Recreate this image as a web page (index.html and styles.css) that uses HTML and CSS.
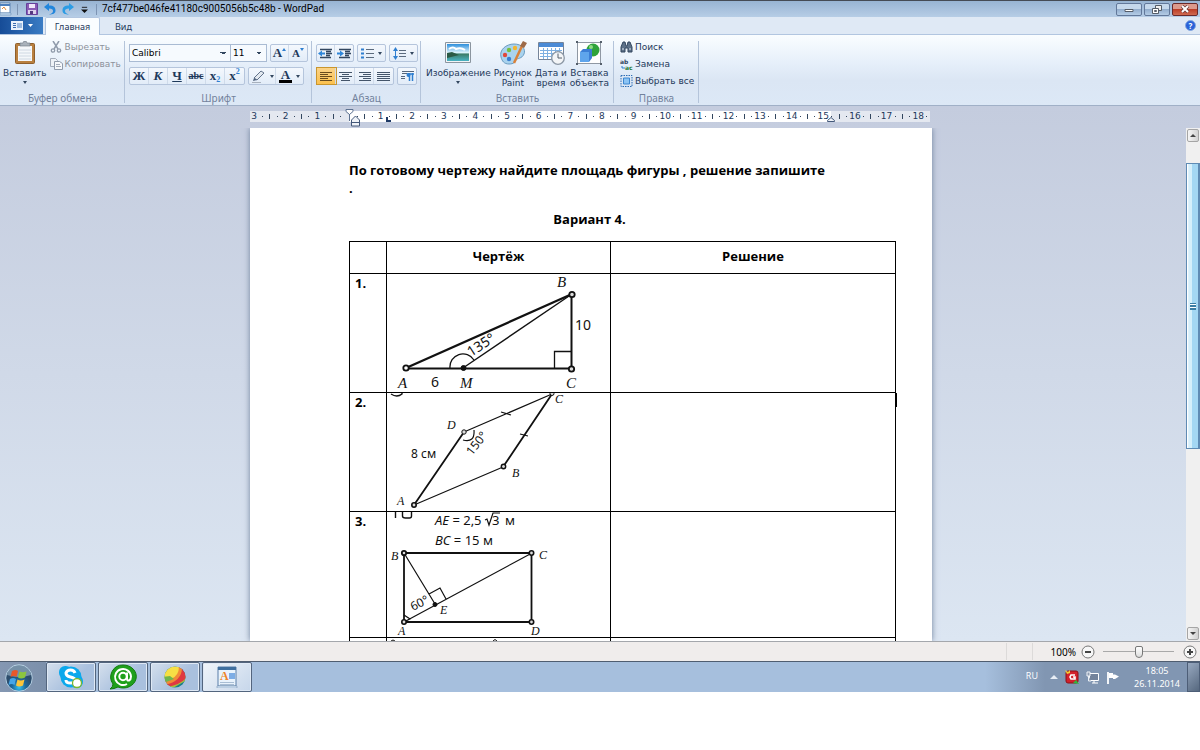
FILE: index.html
```html
<!DOCTYPE html>
<html lang="ru">

<head>
    <meta charset="UTF-8">
    <title>WordPad</title>
    <link rel="stylesheet" href="styles.css">
</head>

<body>
<div class="titlebar">
    <svg class="app-icon" width="12" height="14" viewBox="0 0 12 14"><path d="M0 1h10v10H0z" fill="#fff" stroke="#5f86b4"/><path d="M0 3h10" stroke="#4d80bd" stroke-width="2"/><path d="M2 7l2-2 2 3" stroke="#e08a3a" fill="none"/><path d="M0 11h11v2H0z" fill="#c3daf0" stroke="#6f93bd" stroke-width=".6"/></svg>
    <span class="bar-sep"></span>
    <button class="quick" aria-label="Сохранить"><svg width="12" height="12" viewBox="0 0 12 12"><path d="M.5.5h11v11H.5z" fill="#8a5bb5" stroke="#65409a"/><path d="M3 1h6v4H3z" fill="#efe6fa"/><path d="M2 7h8v4H2z" fill="#ddd0ec"/><path d="M4 8h3v3H4z" fill="#54387f"/></svg></button>
    <button class="quick" aria-label="Отменить"><svg width="12" height="12" viewBox="0 0 12 12"><path d="M0 4l5-4v2.500c5 0 6.500 2 6.500 5S9 11.500 5 11.500c3-1 4-2 4-3.500S8 5.500 5 5.500V8z" fill="#2286dc"/></svg></button>
    <button class="quick" aria-label="Вернуть"><svg width="12" height="12" viewBox="0 0 12 12"><path d="M12 4L7 0v2.500c-5 0-6.500 2-6.500 5s2.500 4 6.500 4C4 10.500 3 9.500 3 8s1-2.500 4-2.500V8z" fill="#2c9ce4"/></svg></button>
    <button class="quick quick-menu" aria-label="Настройка"><svg width="7" height="7" viewBox="0 0 8 8"><path d="M1 1.500h6" stroke="#111"/><path d="M0 4h8L4 8z" fill="#111"/></svg></button>
    <span class="bar-sep"></span>
    <span class="window-title">7cf477be046fe41180c9005056b5c48b - WordPad</span>
    <div class="window-buttons">
        <button class="win" aria-label="Свернуть"><svg width="10" height="8" viewBox="0 0 10 8"><path d="M1 4.500h8v2H1z" fill="#fff" stroke="#555d68"/></svg></button>
        <button class="win" aria-label="Восстановить"><svg width="12" height="9" viewBox="0 0 12 9"><path d="M4.500.5h6v5h-6z" fill="#eee" stroke="#555d68"/><path d="M1.500 3.500h6v5h-6z" fill="#fff" stroke="#555d68"/><path d="M3.500 5.500h2v1h-2z" stroke="#555d68" fill="none"/></svg></button>
        <button class="win win-close" aria-label="Закрыть"><svg width="10" height="8" viewBox="0 0 10 8"><path d="M2 1l6 6M8 1L2 7" stroke="#6b3a3a" stroke-width="3.500"/><path d="M2 1l6 6M8 1L2 7" stroke="#fff" stroke-width="2"/></svg></button>
    </div>
</div>

<div class="tabs">
    <button class="file-tab" aria-label="Файл"><svg width="22" height="9" viewBox="0 0 22 9"><path d="M0 0h12v9H0z" fill="#e9f1fb"/><path d="M2 2.500h3M2 4.500h3M2 6.500h3" stroke="#3b6cb0"/><path d="M6 2h5v5H6z" fill="#9dbbe0"/><path d="M17 3h5l-2.500 3z" fill="#fff"/></svg></button>
    <button class="tab tab-active">Главная</button>
    <button class="tab">Вид</button>
    <button class="help" aria-label="Справка">?</button>
</div>

<div class="ribbon">
    <div class="group group-clipboard">
        <div class="group-body">
            <button class="big"><svg width="22" height="24" viewBox="0 0 22 24"><rect x="1.500" y="2.500" width="19" height="20" rx="1" fill="#b9803f" stroke="#8f5f2b"/><path d="M4 5h14v15H4z" fill="#f4f7fa"/><path d="M5 9h12M5 12h12M5 15h12M5 18h12" stroke="#cfd8e2"/><path d="M6 2h3l1-2h2l1 2h3v3H6z" fill="#a9b2bb" stroke="#6d7680" stroke-width=".6"/></svg><span>Вставить</span><i class="arrow"></i></button>
            <div class="list">
                <button class="row-btn disabled"><svg width="13" height="12" viewBox="0 0 13 12"><path d="M3 0l5 8M9 0L4 8" stroke="#909bab" stroke-width="1.500"/><circle cx="3" cy="9.500" r="1.700" fill="none" stroke="#909bab" stroke-width="1.300"/><circle cx="9" cy="9.500" r="1.700" fill="none" stroke="#909bab" stroke-width="1.300"/></svg>Вырезать</button>
                <button class="row-btn disabled"><svg width="13" height="12" viewBox="0 0 13 12"><path d="M.5.5h5l2 2v6h-7z" fill="#eef2f7" stroke="#a3acba"/><path d="M4.500 3.500h5l3 2v6h-8z" fill="#f6f8fb" stroke="#909bab"/><path d="M6 6.500h4M6 8.500h5" stroke="#a3acba"/></svg>Копировать</button>
            </div>
        </div>
        <div class="group-name">Буфер обмена</div>
    </div>

    <div class="group group-font">
        <div class="group-body group-rows">
            <div class="tool-row">
                <div class="combos">
                    <select class="combo combo-font" aria-label="Шрифт"><option>Calibri</option></select>
                    <select class="combo combo-size" aria-label="Размер"><option>11</option></select>
                </div>
                <div class="set">
                    <button class="tool glyph" aria-label="Увеличить">A<i class="up"></i></button>
                    <button class="tool glyph glyph-small" aria-label="Уменьшить">A<i class="down"></i></button>
                </div>
            </div>
            <div class="tool-row">
                <div class="set set-wide">
                    <button class="tool glyph">Ж</button>
                    <button class="tool glyph italic">К</button>
                    <button class="tool glyph underline">Ч</button>
                    <button class="tool glyph strike">abc</button>
                    <button class="tool glyph">x<sub>2</sub></button>
                    <button class="tool glyph">x<sup>2</sup></button>
                </div>
                <div class="set">
                    <button class="tool tool-split" aria-label="Выделение"><svg width="15" height="13" viewBox="0 0 15 13"><path d="M3 8l7-7 3 2-7 7z" fill="#e3e9f0" stroke="#63738a"/><path d="M3 8l3 2-4 1z" fill="#4d5f7a"/><path d="M1 12.500h9" stroke="#a8b1bd"/></svg><i class="arrow"></i></button>
                    <button class="tool tool-split glyph" aria-label="Цвет текста"><span class="color-a">A</span><i class="arrow"></i></button>
                </div>
            </div>
        </div>
        <div class="group-name">Шрифт</div>
    </div>

    <div class="group group-para">
        <div class="group-body group-rows">
            <div class="tool-row">
                <div class="set">
                    <button class="tool" aria-label="Уменьшить отступ"><svg width="15" height="11" viewBox="0 0 15 11"><path d="M2 1.500h12M8 3.500h5M8 5.500h6M8 7.500h4M2 9.500h11" stroke="#33475f" stroke-width="1.300"/><path d="M0 5.500l4-3v2h3v2H4v2z" fill="#2f86d8"/></svg></button>
                    <button class="tool" aria-label="Увеличить отступ"><svg width="15" height="11" viewBox="0 0 15 11"><path d="M2 1.500h12M8 3.500h5M8 5.500h6M8 7.500h4M2 9.500h11" stroke="#33475f" stroke-width="1.300"/><path d="M7 5.500l-4-3v2H0v2h3v2z" fill="#2f86d8"/></svg></button>
                </div>
                <div class="set">
                    <button class="tool tool-split" aria-label="Список"><svg width="13" height="11" viewBox="0 0 13 11"><path d="M0 1.500h3M0 5.500h3M0 9.500h3" stroke="#2f7fd0" stroke-width="2"/><path d="M5 1.500h8M5 5.500h8M5 9.500h8" stroke="#5b6b7e"/></svg><i class="arrow"></i></button>
                </div>
                <div class="set">
                    <button class="tool tool-split" aria-label="Интервал"><svg width="13" height="13" viewBox="0 0 13 13"><path d="M2.500 2v9" stroke="#2f7fd0"/><path d="M0 4l2.500-4L5 4zM0 9l2.500 4L5 9z" fill="#2f7fd0"/><path d="M6 3.500h7M6 6.500h7M6 9.500h7" stroke="#5b6b7e"/></svg><i class="arrow"></i></button>
                </div>
            </div>
            <div class="tool-row">
                <div class="set set-wide">
                    <button class="tool tool-on" aria-label="По левому краю"><svg width="13" height="11" viewBox="0 0 13 11"><path d="M0 1.500h12M0 3.500h8M0 5.500h12M0 7.500h8M0 9.500h12" stroke="#6a4c1c"/></svg></button>
                    <button class="tool" aria-label="По центру"><svg width="13" height="11" viewBox="0 0 13 11"><path d="M0 1.500h13M3 3.500h7M0 5.500h13M3 7.500h7M2 9.500h9" stroke="#44556a"/></svg></button>
                    <button class="tool" aria-label="По правому краю"><svg width="13" height="11" viewBox="0 0 13 11"><path d="M1 1.500h12M5 3.500h8M1 5.500h12M5 7.500h8M1 9.500h12" stroke="#44556a"/></svg></button>
                    <button class="tool" aria-label="По ширине"><svg width="13" height="11" viewBox="0 0 13 11"><path d="M0 1.500h13M0 3.500h13M0 5.500h13M0 7.500h13M0 9.500h13" stroke="#44556a"/></svg></button>
                </div>
                <div class="set">
                    <button class="tool" aria-label="Абзац"><svg width="13" height="12" viewBox="0 0 13 12"><path d="M1 1.500h12M1 3.500h5M0 6.500h4M0 8.500h4" stroke="#55667b"/><path d="M8.500 3v8M11.500 3v8M6 4h7" stroke="#2f7fd0" stroke-width="1.500"/><circle cx="7.500" cy="5" r="2" fill="#2f7fd0"/></svg></button>
                </div>
            </div>
        </div>
        <div class="group-name">Абзац</div>
    </div>

    <div class="group group-insert">
        <div class="group-body">
            <button class="big"><svg width="28" height="24" viewBox="0 0 28 24"><defs><linearGradient id="sky" x2="0" y2="1"><stop offset="0" stop-color="#2d8fdc"/><stop offset=".5" stop-color="#d9f1fb"/><stop offset=".6" stop-color="#3c7d6a"/><stop offset="1" stop-color="#49b3c4"/></linearGradient></defs><path d="M1.500 1.500h25v20h-25z" fill="#f3f5f7" stroke="#8b959f"/><path d="M3 3h22v17H3z" fill="url(#sky)"/><path d="M3 12l5-1 7 3-12 3z" fill="#2b5a45"/><path d="M5 8q4-3 7 0 5-2 9 1" stroke="#fff" stroke-width="2" fill="none"/></svg><span>Изображение</span><i class="arrow"></i></button>
            <button class="big"><svg width="28" height="24" viewBox="0 0 28 24"><path d="M2 16C0 9 7 3 15 3s12 5 10 10-7 4-8 6-2 4-7 4-7-3-8-7z" fill="#a9d3ee" stroke="#6a9bc0"/><circle cx="6" cy="14" r="2.200" fill="#e2483a"/><circle cx="10" cy="9" r="2.200" fill="#79bf3f"/><circle cx="16" cy="7" r="2.200" fill="#f2b632"/><circle cx="10" cy="18" r="2.200" fill="#3a7fd0"/><path d="M15 22l8-17" stroke="#d9823a" stroke-width="2.500"/><path d="M21 5l3-5 4 2-3 5z" fill="#9d6b48"/></svg><span>Рисунок<br>Paint</span></button>
            <button class="big"><svg width="28" height="24" viewBox="0 0 28 24"><path d="M1.500 1.500h25v17h-25z" fill="#fff" stroke="#75859a"/><path d="M2 2h24v4H2z" fill="#4b8bd6"/><path d="M3 9.500h22M3 12.500h22M3 15.500h22M6.500 7v11M10.500 7v11M14.500 7v11M18.500 7v11M22.500 7v11" stroke="#7db0e2"/><circle cx="21" cy="17" r="6.300" fill="#f3f5f7" stroke="#8c98a5" stroke-width="1.300"/><path d="M21 12.500V17h4" stroke="#55606c" fill="none"/></svg><span>Дата и<br>время</span></button>
            <button class="big"><svg width="26" height="24" viewBox="0 0 26 24"><path d="M1.500 1.500h23v21h-23z" fill="#fff" stroke="#8f98a3"/><circle cx="17" cy="9" r="6.500" fill="#2fa33b"/><circle cx="15" cy="6" r="2" fill="#8fdc84"/><path d="M4 11l3-3h9v9l-3 4H4z" fill="#3c7fd6"/><path d="M4 11h9v10H4z" fill="#5fa5ec"/><path d="M0 0h2v2H0zM24 0h2v2h-2zM0 22h2v2H0zM24 22h2v2h-2z" fill="#555f6b"/></svg><span>Вставка<br>объекта</span></button>
        </div>
        <div class="group-name">Вставить</div>
    </div>

    <div class="group group-edit">
        <div class="group-body">
            <div class="list">
                <button class="row-btn"><svg width="13" height="12" viewBox="0 0 13 12"><path d="M1 6l2-5h2l1 4h1l1-4h2l2 5v5H8V7H5v4H1z" fill="#5d7188" stroke="#33475f"/><path d="M2 8h2M9 8h2" stroke="#dfe8f2"/></svg>Поиск</button>
                <button class="row-btn"><svg class="replace" width="13" height="12" viewBox="0 0 13 12"><text x="0" y="6" class="ico-text">ab</text><text x="5" y="12" class="ico-text ico-green">ac</text><path d="M2 8v2h3" stroke="#2f7fd0" fill="none"/></svg>Замена</button>
                <button class="row-btn"><svg width="13" height="12" viewBox="0 0 13 12"><path d="M1 .5h11v11H1z" fill="none" stroke="#2d6cb4" stroke-dasharray="1.500 1"/><path d="M3.500 3h6v6h-6z" fill="#8cc4f4" stroke="#3c86cf"/></svg>Выбрать все</button>
            </div>
        </div>
        <div class="group-name">Правка</div>
    </div>
</div>

<div class="workspace">
    <div class="ruler-line">
        <div class="ruler">
            <div class="cm"><b>3</b><i></i></div>
            <div class="cm"><b>2</b><i></i></div>
            <div class="cm"><b>1</b><i></i></div>
            <div class="cm"><b></b><i></i></div>
            <div class="cm"><b>1</b><i></i></div>
            <div class="cm"><b>2</b><i></i></div>
            <div class="cm"><b>3</b><i></i></div>
            <div class="cm"><b>4</b><i></i></div>
            <div class="cm"><b>5</b><i></i></div>
            <div class="cm"><b>6</b><i></i></div>
            <div class="cm"><b>7</b><i></i></div>
            <div class="cm"><b>8</b><i></i></div>
            <div class="cm"><b>9</b><i></i></div>
            <div class="cm"><b>10</b><i></i></div>
            <div class="cm"><b>11</b><i></i></div>
            <div class="cm"><b>12</b><i></i></div>
            <div class="cm"><b>13</b><i></i></div>
            <div class="cm"><b>14</b><i></i></div>
            <div class="cm"><b>15</b><i></i></div>
            <div class="cm"><b>16</b><i></i></div>
            <div class="cm"><b>17</b><i></i></div>
            <div class="cm cm-half"><b>18</b><i></i></div>
            <svg class="marks" width="680" height="20" viewBox="250 108 680 20"><path d="M346 109.500h7v2l-3.500 3-3.500-3zM349.500 114v7" fill="#fff" stroke="#5d7291"/><path d="M351.500 126v-6l4-4 4 4v6zM351.500 122.500h8" fill="#f0f3f8" stroke="#44597a"/><path d="M387 117v4h4" stroke="#1f3a66" stroke-width="2" fill="none"/><path d="M827.500 121.500v-1l3.500-3 3.500 3v1z" fill="#f0f3f8" stroke="#44597a"/></svg>
        </div>
    </div>
    <div class="view">
        <div class="paper-area">
            <div class="paper">
                <p class="task">По готовому чертежу найдите площадь фигуры , решение запишите<br>.</p>
                <p class="variant">Вариант 4.</p>
                <table class="tasks">
                    <tr class="head">
                        <th class="num"></th>
                        <th class="draw">Чертёж</th>
                        <th>Решение</th>
                    </tr>
                    <tr>
                        <td class="num">1.</td>
                        <td><svg class="figure" width="223" height="118" viewBox="387 274 223 118">
                            <g class="line">
                                <path d="M406 368l166-74" stroke-width="2.300"/>
                                <path d="M463 368l109-74" stroke-width="1.400"/>
                                <path d="M406 368.500h166" stroke-width="2"/>
                                <path d="M571.500 295v74" stroke-width="2"/>
                                <path d="M554.500 368v-16.500h17M450 368a13 13 0 0 1 24-8" stroke-width="1.300"/>
                                <circle cx="406" cy="368" r="2.700" stroke-width="1.800" class="hollow"/>
                                <circle cx="463.500" cy="368" r="2.500" class="dot"/>
                                <circle cx="571.500" cy="369" r="2.700" stroke-width="1.800"/>
                                <circle cx="572" cy="294.500" r="2.700" stroke-width="1.800"/>
                            </g>
                            <text x="398" y="388" class="letter">A</text>
                            <text x="431" y="387" class="digit">6</text>
                            <text x="460" y="388" class="letter">M</text>
                            <text x="566" y="388" class="letter">C</text>
                            <text x="557" y="287" class="letter">B</text>
                            <text x="575" y="330" class="digit">10</text>
                            <text x="471" y="357" class="digit" transform="rotate(-33 471 357)">135°</text>
                        </svg></td>
                        <td></td>
                    </tr>
                    <tr>
                        <td class="num">2.</td>
                        <td><svg class="figure" width="223" height="118" viewBox="387 393 223 118">
                            <g class="line">
                                <path d="M391 394q6 4 11 0v-2" stroke-width="1.400"/>
                                <path d="M414 505l50-73M503 467l49-73" stroke-width="1.800"/>
                                <path d="M464 432l88-38M414 505l89-38M501 412l10 3M520 434l8 2M474 430q1 13-11 10" stroke-width="1.200"/>
                                <circle cx="414" cy="505" r="2.200" stroke-width="1.600"/>
                                <circle cx="464" cy="432" r="2.200"/>
                                <circle cx="503.500" cy="466.500" r="2.200" stroke-width="1.400"/>
                                <circle cx="552" cy="393.500" r="2"/>
                            </g>
                            <text x="397" y="505" class="letter small">A</text>
                            <text x="512" y="477" class="letter small">B</text>
                            <text x="555" y="403" class="letter small">C</text>
                            <text x="447" y="429" class="letter small">D</text>
                            <text x="411" y="458" class="digit small">8 см</text>
                            <text x="472" y="456" class="digit small" transform="rotate(-52 472 456)">150°</text>
                        </svg></td>
                        <td class="with-caret"><span class="caret"></span></td>
                    </tr>
                    <tr>
                        <td class="num">3.</td>
                        <td><svg class="figure" width="223" height="125" viewBox="387 512 223 125">
                            <g class="line">
                                <path d="M395.500 512v6M402.500 512v4q0 2 3 2h4q2 0 2-2v-4" stroke-width="1.400"/>
                                <path d="M404 553h127.500v69H404z" stroke-width="1.800"/>
                                <path d="M404 553l31 51M404 622l128-69M429 594l11-6 6 11M404 615l6 4-6 3" stroke-width="1.200"/>
                                <circle cx="404" cy="553" r="2.200" stroke-width="1.800"/>
                                <circle cx="531.500" cy="553" r="2.200" stroke-width="1.600"/>
                                <circle cx="404" cy="622" r="2.200" stroke-width="1.600"/>
                                <circle cx="531.500" cy="622" r="2.200" stroke-width="1.600"/>
                                <circle cx="435" cy="604.500" r="2" class="dot"/>
                                <path d="M485 520l2-1 2 6 4-12h7" stroke-width="1.200"/>
                            </g>
                            <text x="435" y="525" class="formula"><tspan class="it">AE</tspan> = 2,5</text>
                            <text x="492" y="525" class="formula">3</text>
                            <text x="505" y="525" class="formula">м</text>
                            <text x="435" y="545" class="formula"><tspan class="it">BC</tspan> = 15 м</text>
                            <text x="391" y="560" class="letter small">B</text>
                            <text x="539" y="559" class="letter small">C</text>
                            <text x="398" y="635" class="letter small">A</text>
                            <text x="531" y="635" class="letter small">D</text>
                            <text x="440" y="614" class="letter small">E</text>
                            <text x="413" y="611" class="digit small" transform="rotate(-27 413 611)">60°</text>
                        </svg></td>
                        <td></td>
                    </tr>
                    <tr>
                        <td class="num"></td>
                        <td><svg class="figure" width="223" height="20" viewBox="387 638 223 20"><g class="line"><path d="M391 641l2-1 2 1M493 641q2-3 4 0"/></g></svg></td>
                        <td></td>
                    </tr>
                </table>
            </div>
        </div>
        <div class="scrollbar">
            <button class="scroll-btn" aria-label="Вверх"><i class="tri-up"></i></button>
            <div class="track"><div class="thumb"><i></i></div></div>
            <button class="scroll-btn" aria-label="Вниз"><i class="tri-down"></i></button>
        </div>
    </div>
</div>

<div class="status">
    <span class="status-cell"></span>
    <label class="zoom-label" for="zoom">100%</label>
    <button class="zoom-btn" aria-label="Мельче"><svg width="14" height="14" viewBox="0 0 14 14"><circle cx="7" cy="7" r="6" fill="#f7f7f7" stroke="#777"/><path d="M4 7h6" stroke="#444" stroke-width="2"/></svg></button>
    <input class="zoom" id="zoom" type="range" min="0" max="200" value="100">
    <button class="zoom-btn" aria-label="Крупнее"><svg width="14" height="14" viewBox="0 0 14 14"><circle cx="7" cy="7" r="6" fill="#f7f7f7" stroke="#777"/><path d="M4 7h6M7 4v6" stroke="#444" stroke-width="2"/></svg></button>
</div>

<div class="taskbar">
    <button class="start" aria-label="Пуск"><svg width="30" height="28" viewBox="0 0 30 28"><defs><radialGradient id="orb" cy=".85"><stop offset="0" stop-color="#35c3f0"/><stop offset=".5" stop-color="#1d6a9e"/><stop offset="1" stop-color="#2d4d6c"/></radialGradient></defs><circle cx="15" cy="14" r="13.300" fill="url(#orb)" stroke="#b5cfe2"/><path d="M3 11a12 10 0 0 1 24 0q-12 4-24 0z" fill="#cfe2ef" opacity=".45"/><path d="M8 7q4-2 6 0l-1.500 6q-3-2-6 0z" fill="#e9572b"/><path d="M15.500 7.500q3 1.500 7 0l-1.500 6q-4 2-7 0z" fill="#8cc63e"/><path d="M6 15q3-2 6 0l-1.500 6q-3-2-6 0z" fill="#45a5e8"/><path d="M13.500 15.500q3 2 7 0l-1.500 6q-4 2-7 0z" fill="#fbc53a"/></svg></button>
    <button class="task-btn" aria-label="Skype"><svg width="26" height="24" viewBox="0 0 26 24"><rect x="1" y="1" width="13" height="13" rx="6" fill="#0ba8ec"/><rect x="12" y="10" width="13" height="13" rx="6" fill="#0ba8ec"/><circle cx="13" cy="12" r="10.500" fill="#0ba8ec"/><path d="M17 8q-1-3-4.500-3T8 8q0 3 4.500 4T17 15q0 3-4.500 3T8 15" fill="none" stroke="#fff" stroke-width="3"/><circle cx="19" cy="18" r="4.500" fill="#fff" stroke="#7cb82f" stroke-width="1.300"/></svg></button>
    <button class="task-btn" aria-label="Агент"><svg width="28" height="26" viewBox="0 0 28 26"><path d="M14 1a13 11.500 0 1 1-5 22q-4 2-8 2 3-2 3-5A12 12 0 0 1 14 1z" fill="#1fa01c" stroke="#13790f"/><circle cx="14" cy="12.500" r="3.700" fill="none" stroke="#fff" stroke-width="2"/><path d="M18 8.500v6q0 2.500 2 2 2-1 2-4a8 8 0 1 0-4 7.500" fill="none" stroke="#fff" stroke-width="2"/></svg></button>
    <button class="task-btn" aria-label="Браузер"><svg width="24" height="22" viewBox="0 0 24 22"><clipPath id="ball"><circle cx="12" cy="11" r="10.500"/></clipPath><g clip-path="url(#ball)"><path d="M0 0h24v22H0z" fill="#177f8b"/><path d="M0 22L24 9v5L10 22z" fill="#a7bf3d"/><path d="M0 18Q18 16 17 0h8v10Q18 19 4 21z" fill="#df3941"/><path d="M0 15Q14 13 14 0h5Q20 15 2 19z" fill="#f08b38"/><path d="M0 8L5 0h11q0 10-8 13-5 1-8 0z" fill="#f6df45"/><path d="M0 11l7-1 4 3-8 3z" fill="#6fb54e"/></g></svg></button>
    <button class="task-btn" aria-label="WordPad"><svg width="22" height="22" viewBox="0 0 22 22"><path d="M2 1h18v19H2z" fill="#e9f3fc" stroke="#5b7fa8"/><path d="M2 1h18v3H2z" fill="#3f6f9f"/><path d="M13 8h6M13 10h6M13 12h6" stroke="#5a96dd" stroke-width="1.500"/><text x="4" y="14" class="ico-a">A</text><path d="M4 16.500h14M4 18.500h14" stroke="#a9bed4"/><path d="M1 20h20v2H1z" fill="#d7e8f7" stroke="#7896b6" stroke-width=".6"/></svg></button>
    <div class="tray">
        <span class="lang">RU</span>
        <svg width="8" height="5" viewBox="0 0 8 5"><path d="M0 4l4-4 4 4z" fill="#e7edf5"/></svg>
        <svg width="14" height="14" viewBox="0 0 14 14"><rect x="1" y="1" width="12" height="12" rx="2" fill="#d3202b" stroke="#8c1018"/><path d="M10 5H6L5 7l1 2h4V7H8" fill="none" stroke="#fff" stroke-width="1.600"/><path d="M0 0l3 2 2-2v3L2 4z" fill="#f2cf31"/><path d="M8 13l3-3 3 4z" fill="#31b43c"/></svg>
        <svg width="13" height="13" viewBox="0 0 13 13"><path d="M3.500 2.500h9v7h-9z" fill="#73839b" stroke="#fff"/><path d="M6 12h6M8 10v2" stroke="#fff"/><path d="M1 1h3v4H1zM2.500 5v5H5" fill="#8d9bb0" stroke="#eef2f7"/></svg>
        <svg width="13" height="13" viewBox="0 0 13 13"><path d="M2 1v12" stroke="#fff" stroke-width="1.800"/><path d="M3 2h4v1.500h2l4 2-4 2.500H7V7H3z" fill="#fff"/></svg>
        <div class="clock">18:05<br>26.11.2014</div>
        <button class="show-desktop" aria-label="Рабочий стол"></button>
    </div>
</div>
</body>

</html>
```
FILE: styles.css
```css
* {
    margin: 0;
    padding: 0;
    box-sizing: border-box;
}

body {
    background: #fff;
    font-family: "DejaVu Sans", sans-serif;
    font-size: 9px;
    color: #1e395b;
    overflow: hidden;
}

button {
    border: none;
    background: none;
    font: inherit;
    color: inherit;
}

svg {
    display: block;
    flex: none;
}

/* title bar */
.titlebar {
    display: flex;
    align-items: center;
    height: 17px;
    border-top: 1px solid #454b55;
    background: linear-gradient(#98b4d3, #b6cde6);
}

.bar-sep {
    width: 1px;
    height: 11px;
    margin: 0 5px;
    background: #7d94b3;
}

.quick {
    display: flex;
    align-items: center;
    justify-content: center;
    width: 18px;
    height: 16px;
}

.quick-menu {
    width: 14px;
}

.window-title {
    flex: 1;
    font-family: Roboto, sans-serif;
    font-size: 10px;
    line-height: 14px;
    color: #000;
    white-space: nowrap;
}

.window-buttons {
    display: flex;
    gap: 2px;
    padding-right: 2px;
}

.win {
    display: flex;
    align-items: center;
    justify-content: center;
    width: 26px;
    height: 13px;
    border: 1px solid #62789a;
    border-radius: 2px;
    background: linear-gradient(#c5d8ec 45%, #93aece 50%, #b4cce6);
}

.win-close {
    border-color: #6a2a2a;
    background: linear-gradient(#dc9a8c 45%, #bd3f27 50%, #cf6a50);
}

/* tabs */
.tabs {
    display: flex;
    height: 18px;
    border-bottom: 1px solid #b2c6e0;
    background: #dfe9f5;
    font-family: "Noto Sans", sans-serif;
    font-size: 9px;
}

.file-tab {
    display: flex;
    align-items: center;
    justify-content: center;
    width: 43px;
    margin-right: 2px;
    background: linear-gradient(90deg, #164c97, #3a7cc4);
}

.tab {
    padding: 0 14px 0 15px;
    line-height: 19px;
}

.tab-active {
    width: 55px;
    height: 18px;
    padding: 0;
    border: 1px solid #b2c6e0;
    border-bottom: none;
    border-radius: 2px 2px 0 0;
    background: #fafdff;
    line-height: 18px;
}

.help {
    width: 11px;
    height: 11px;
    margin: 3px 4px 0 auto;
    border: 1px solid #86a8e0;
    border-radius: 50%;
    background: #2a62d8;
    color: #fff;
    font-size: 8px;
    font-weight: bold;
    line-height: 9px;
}

/* ribbon */
.ribbon {
    display: flex;
    height: 71px;
    padding-top: 3px;
    border-bottom: 1px solid #a0b0c7;
    background: linear-gradient(#fafdff, #e6effa 40%, #dbe6f4 65%, #dce8f6);
}

.group {
    height: 65px;
    background: linear-gradient(#b4c4da, #b4c4da) right bottom / 1px 62px no-repeat;
}

.group-clipboard {
    width: 125px;
}

.group-font {
    width: 187px;
}

.group-para {
    width: 109px;
}

.group-insert {
    width: 193px;
}

.group-edit {
    width: 85px;
}

.group-body {
    display: flex;
    height: 54px;
    padding-left: 3px;
}

.group-insert .group-body {
    justify-content: space-between;
    padding: 0 5px;
}

.group-name {
    font-family: "Noto Sans", sans-serif;
    font-size: 10px;
    line-height: 12px;
    color: #72829c;
    text-align: center;
}

.group-rows {
    flex-direction: column;
    gap: 5px;
    padding: 6px 4px 0;
}

.big {
    display: flex;
    flex-direction: column;
    align-items: center;
    gap: 3px;
    padding-top: 3px;
    line-height: 10px;
}

.list {
    display: flex;
    flex-direction: column;
    padding-left: 3px;
}

.row-btn {
    display: flex;
    align-items: center;
    gap: 2px;
    height: 17px;
    white-space: nowrap;
}

.disabled {
    color: #8d929b;
}

.arrow {
    border: 2px solid transparent;
    border-top: 3px solid #33475f;
    border-bottom: none;
}

.tool-row {
    display: flex;
    gap: 3px;
}

.combos {
    display: flex;
}

.combo {
    height: 18px;
    padding-left: 2px;
    border: 1px solid #a9bbd3;
    border-radius: 0;
    appearance: none;
    font: inherit;
    color: #000;
    background:
        linear-gradient(45deg, transparent 50%, #33475f 50%) right 7px center / 3px 3px no-repeat,
        linear-gradient(-45deg, transparent 50%, #33475f 50%) right 4px center / 3px 3px no-repeat,
        #f6fafe;
    background:
        linear-gradient(to top right, transparent 50%, #33475f 50%) right 7px center / 3px 3px no-repeat,
        linear-gradient(to top left, transparent 50%, #33475f 50%) right 4px center / 3px 3px no-repeat,
        #f6fafe;
}

.combo-font {
    width: 102px;
}

.combo-size {
    width: 36px;
    border-left: none;
}

.set {
    display: flex;
    height: 18px;
    border: 1px solid #b5c5dc;
    border-radius: 2px;
    background: linear-gradient(#f4f8fd, #e2ecf8);
}

.tool {
    display: flex;
    align-items: center;
    justify-content: center;
    width: 18px;
    height: 16px;
    border-right: 1px solid #cfdbea;
}

.set-wide .tool {
    width: 19px;
}

.tool:last-child {
    border-right: none;
}

.tool-split {
    width: 27px;
    gap: 4px;
}

.tool-on {
    background: linear-gradient(#fbd388, #fcc14d);
    outline: 1px solid #c9962f;
}

.glyph {
    font-family: "Liberation Serif", serif;
    font-size: 13px;
    font-weight: bold;
    line-height: 14px;
}

.glyph-small {
    font-size: 11px;
}

.up,
.down {
    align-self: flex-start;
    margin-top: 3px;
    border: 2px solid transparent;
    border-bottom: 3px solid #2f7fd0;
    border-top: none;
}

.down {
    border-top: 3px solid #2f7fd0;
    border-bottom: none;
}

.italic {
    font-style: italic;
}

.underline {
    text-decoration: underline;
}

.strike {
    font-size: 10px;
    text-decoration: line-through;
}

.glyph sub,
.glyph sup {
    font-size: 8px;
    line-height: 8px;
    color: #2f7fd0;
}

.glyph sub {
    align-self: flex-end;
}

.glyph sup {
    align-self: flex-start;
}

.color-a {
    height: 14px;
    padding: 0 2px;
    border-bottom: 3px solid #000;
    line-height: 12px;
}

.replace {
    overflow: visible;
}

.ico-text {
    font-family: "DejaVu Sans", sans-serif;
    font-size: 6px;
    font-weight: bold;
    fill: #33475f;
}

.ico-green {
    fill: #257a35;
}

/* work area */
.workspace {
    background: linear-gradient(#c4ccde, #dce6f2);
}

.ruler-line {
    display: flex;
    justify-content: center;
    padding: 5px 20px 6px 0;
}

.ruler {
    position: relative;
    display: flex;
    width: 680px;
    height: 11px;
    background: linear-gradient(90deg, #e4e8f0 99px, #fff 99px, #fff 581px, #e4e8f0 581px);
}

.cm {
    display: flex;
    flex: 2 1 0;
    min-width: 0;
}

.cm b {
    display: flex;
    flex: none;
    justify-content: center;
    width: 8px;
    font-weight: normal;
    line-height: 11px;
}

/* two dots with a half-centimetre tick between them */
.cm i {
    flex: 1;
    background:
        linear-gradient(#33475f, #33475f) 50% 50% / 1px 5px no-repeat,
        linear-gradient(#33475f, #33475f) 4px 50% / 1px 1px no-repeat,
        linear-gradient(#33475f, #33475f) right 4px top 50% / 1px 1px no-repeat;
}

.cm-half {
    flex-grow: 1;
}

.cm-half i {
    background: linear-gradient(#33475f, #33475f) 4px 50% / 1px 1px no-repeat;
}

.marks {
    position: absolute;
    left: 0;
    top: -3px;
}

.view {
    display: flex;
    height: 513px;
    overflow: hidden;
}

.paper-area {
    display: flex;
    flex: 1;
    justify-content: center;
    padding-right: 4px;
}

.paper {
    width: 682px;
    padding: 33px 36px 0 99px;
    background: #fff;
    box-shadow: 0 0 6px #6d7f9c;
    font-family: "Open Sans", sans-serif;
    font-size: 13px;
    font-weight: bold;
    color: #000;
}

.task {
    line-height: 18px;
}

.variant {
    padding: 13px 66px 13px 0;
    line-height: 18px;
    text-align: center;
}

.tasks {
    width: 547px;
    border-collapse: collapse;
    table-layout: fixed;
}

.tasks th,
.tasks td {
    border: 1px solid #000;
    vertical-align: top;
}

.tasks th {
    height: 32px;
    line-height: 29px;
}

.tasks .num {
    width: 37px;
    padding-left: 5px;
    line-height: 18px;
}

.tasks .draw {
    width: 224px;
}

.with-caret {
    position: relative;
}

.caret {
    position: absolute;
    right: -2px;
    top: 0;
    width: 2px;
    height: 14px;
    background: #000;
}

.line {
    fill: none;
    stroke: #111;
}

.line circle {
    fill: #ddd;
}

.line .hollow {
    fill: #fff;
}

.line .dot {
    fill: #111;
}

.letter,
.digit,
.formula {
    font-family: "Noto Sans", sans-serif;
    font-size: 14px;
    font-weight: normal;
    fill: #111;
}

.letter {
    font-family: "Liberation Serif", serif;
    font-size: 15px;
    font-style: italic;
}

.small {
    font-size: 12px;
}

.formula {
    font-size: 13px;
}

.it {
    font-style: italic;
}

/* scrollbar */
.scrollbar {
    display: flex;
    flex-direction: column;
    width: 14px;
    background: #f0f0f0;
}

.scroll-btn {
    display: flex;
    align-items: center;
    justify-content: center;
    width: 12px;
    height: 13px;
    margin: 1px;
    border: 1px solid #a5a5a5;
    border-radius: 2px;
    background: linear-gradient(90deg, #f5f5f5, #d2d2d2);
}

.tri-up,
.tri-down {
    border: 3px solid transparent;
    border-bottom: 3px solid #444;
    border-top: none;
}

.tri-down {
    border-top: 3px solid #444;
    border-bottom: none;
}

.track {
    flex: 1;
    padding-top: 20px;
}

.thumb {
    display: flex;
    align-items: center;
    justify-content: center;
    height: 286px;
    border: 1px solid #5f8bb4;
    border-right-width: 2px;
    background: linear-gradient(90deg, #fff 10%, #d5effb 15%, #d5effb 45%, #a4d7f3 50%);
}

.thumb i {
    width: 6px;
    height: 7px;
    background: repeating-linear-gradient(#3b7da5 0 1px, #fff 1px 2px, #3b7da5 2px 3px);
}

/* status bar */
.status {
    display: flex;
    align-items: center;
    justify-content: flex-end;
    height: 20px;
    padding-right: 3px;
    border-top: 1px solid #a4a7ac;
    background: #f0edec;
}

.status-cell {
    width: 27px;
    height: 17px;
    margin-right: 18px;
    border: 1px solid #dcdad9;
    border-width: 0 1px;
}

.zoom-label {
    margin-right: 5px;
    font-family: "Noto Sans", sans-serif;
    font-size: 10px;
    color: #000;
}

.zoom {
    width: 71px;
    height: 14px;
    margin: 0 9px 0 8px;
    appearance: none;
    background: linear-gradient(#a9a9a9, #a9a9a9) center / 100% 1px no-repeat;
}

.zoom::-webkit-slider-thumb {
    width: 8px;
    height: 12px;
    appearance: none;
    border: 1px solid #777;
    border-radius: 2px 2px 4px 4px;
    background: linear-gradient(#fff, #ddd);
}

/* taskbar */
.taskbar {
    display: flex;
    height: 31px;
    border-top: 1px solid #4f5d70;
    background: linear-gradient(90deg, #8497b2, #7c90ab 46px, #a6bfdd 46px, #a6bfdd calc(100% - 215px), #8196b2 calc(100% - 155px));
}

.start {
    width: 46px;
    padding: 1px 0 0 4px;
}

.task-btn {
    display: flex;
    align-items: center;
    justify-content: center;
    width: 50px;
    height: 30px;
    margin-right: 2px;
    border: 1px solid #53657e;
    border-radius: 2px;
    box-shadow: inset 0 0 0 1px #dfe9f5;
    background: linear-gradient(135deg, #d5e0ed, #a9c0de 60%);
}

.task-btn:nth-child(5) {
    background: linear-gradient(135deg, #f0f5fa, #c6d6ea);
}

.ico-a {
    font-family: "Liberation Serif", serif;
    font-size: 12px;
    font-weight: bold;
    fill: #ee8429;
}

.tray {
    display: flex;
    align-items: center;
    gap: 7px;
    margin-left: auto;
    color: #fff;
}

.lang {
    margin-right: 5px;
    padding-bottom: 4px;
    font-family: "Open Sans", sans-serif;
    font-size: 9px;
}

.clock {
    margin-left: 8px;
    font-family: "Noto Sans", sans-serif;
    font-size: 9px;
    line-height: 13px;
    text-align: center;
}

.show-desktop {
    width: 13px;
    height: 30px;
    border: 1px solid #4d5e77;
    background: linear-gradient(135deg, #97a8bf, #56687f);
}
```
